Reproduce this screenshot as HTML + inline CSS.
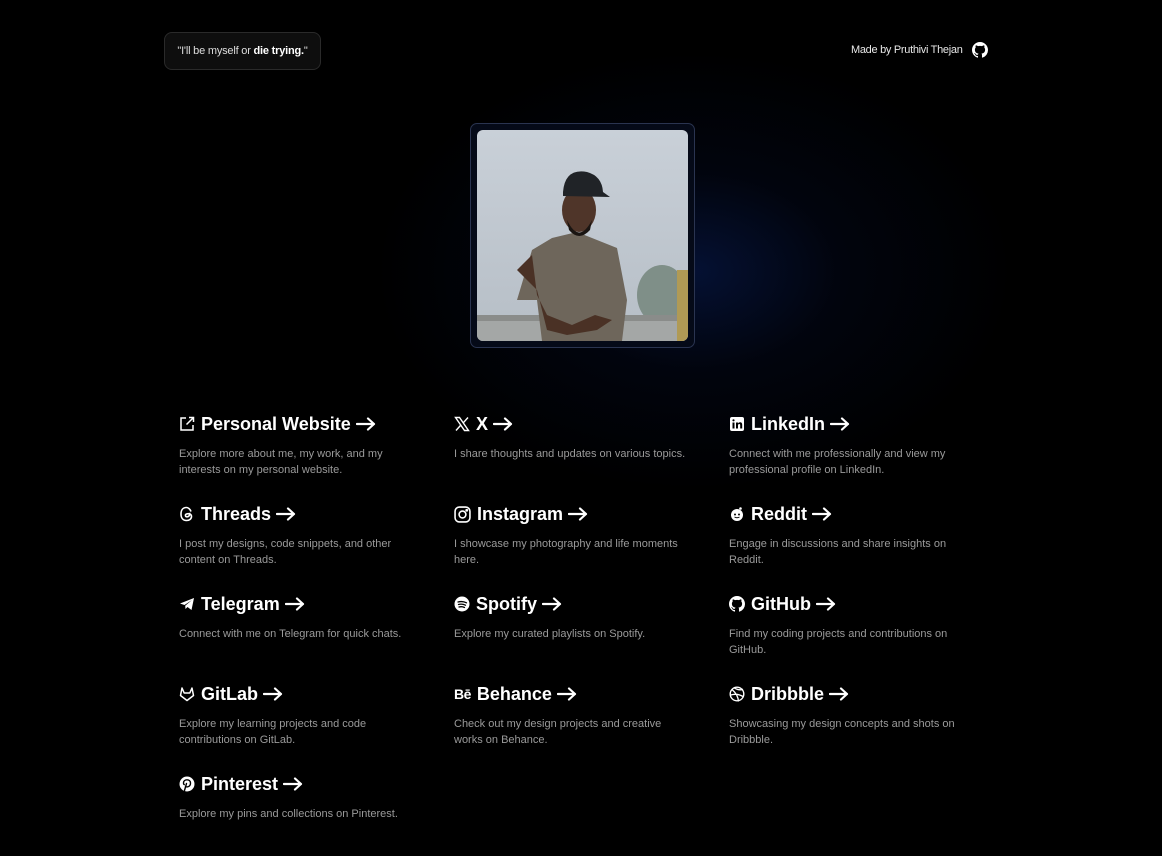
<!DOCTYPE html>
<html><head><meta charset="utf-8"><style>
*{margin:0;padding:0;box-sizing:border-box}
body{width:1162px;height:856px;background:#000;position:relative;overflow:hidden;font-family:"Liberation Sans",sans-serif;color:#fff}
.glow{position:absolute;left:230px;top:-20px;width:800px;height:560px;background:radial-gradient(ellipse 320px 220px at 58% 52%,rgba(8,28,85,.6) 0%,rgba(4,14,45,.3) 45%,rgba(0,0,0,0) 100%)}
.quote{position:absolute;left:164px;top:32px;width:157px;height:38px;border:1px solid #2a2a2a;border-radius:8px;background:#0e0e0e;font-size:11px;color:#ddd;display:flex;align-items:center;justify-content:center;letter-spacing:-.2px}
.quote b{color:#fff}
.made{position:absolute;left:851px;top:44px;font-size:11px;color:#e8e8e8;letter-spacing:-.3px}
.gh{position:absolute;left:972px;top:42px}
.card{position:absolute;left:470px;top:123px;width:225px;height:225px;border:1px solid #2a3450;border-radius:7px;background:#050a18}
.photo{position:absolute;left:477px;top:130px;width:211px;height:211px;border-radius:6px;overflow:hidden}
.item{position:absolute;width:234px}
.t{font-size:18px;font-weight:bold;display:flex;align-items:center;height:22px;white-space:nowrap}
.t svg{margin-right:6px;flex:none}
.t svg.ar{margin:0 0 0 5px}
.d{font-size:11px;color:#9a9a9a;line-height:16px;margin-top:11px}
</style></head><body>
<svg width="0" height="0" style="position:absolute"><defs>
<symbol id="arr" viewBox="0 0 20 14"><path d="M1 7h17M12 1.5L18 7l-6 5.5" fill="none" stroke="#fff" stroke-width="2.2" stroke-linecap="round" stroke-linejoin="round"/></symbol>
<symbol id="ghi" viewBox="0 0 16 16"><path fill="#fff" d="M8 0C3.58 0 0 3.58 0 8c0 3.54 2.29 6.53 5.47 7.59.4.07.55-.17.55-.38v-1.33c-2.230.48-2.7-1.07-2.7-1.07-.36-.92-.89-1.17-.89-1.17-.73-.5.05-.49.05-.49.8.06 1.23.83 1.23.83.71 1.23 1.87.87 2.33.66.07-.52.28-.87.5-1.07-1.78-.2-3.64-.89-3.64-3.95 0-.87.31-1.59.82-2.15-.08-.2-.36-1.02.08-2.12 0 0 .67-.21 2.2.82a7.6 7.6 0 0 1 4 0c1.53-1.04 2.2-.82 2.2-.82.44 1.1.16 1.92.08 2.12.51.56.82 1.27.82 2.15 0 3.07-1.87 3.75-3.65 3.95.29.25.54.73.54 1.48v2.2c0 .21.15.46.55.38A8 8 0 0 0 16 8c0-4.42-3.58-8-8-8z"/></symbol>
</defs></svg>
<div class="glow"></div>
<div class="quote"><span>"I'll be myself or <b>die trying.</b>"</span></div>
<div class="made">Made by Pruthivi Thejan</div>
<svg class="gh" width="16" height="16"><use href="#ghi"/></svg>
<div class="card"></div>
<div class="photo"><svg width="211" height="211" viewBox="0 0 211 211">
<defs><linearGradient id="sky" x1="0" y1="0" x2="0" y2="1"><stop offset="0" stop-color="#c9d0d8"/><stop offset="1" stop-color="#b6bec6"/></linearGradient></defs>
<rect width="211" height="211" fill="url(#sky)"/>
<ellipse cx="185" cy="165" rx="25" ry="30" fill="#7f8f88"/>
<rect x="0" y="188" width="211" height="23" fill="#a4a7a6"/>
<rect x="0" y="185" width="211" height="6" fill="#8a8c8a"/>
<rect x="200" y="140" width="11" height="71" fill="#b09a55"/>
<path d="M55 120 L75 108 L100 102 L120 110 L140 118 L150 170 L145 211 L65 211 L60 170 L40 170 Z" fill="#6e665b"/>
<path d="M40 140 L60 160 L70 200 L90 205 L120 200 L135 190 L118 185 L95 195 L70 185 L60 165 L55 125 Z" fill="#4a3125"/>
<ellipse cx="102" cy="80" rx="17" ry="22" fill="#4f3529"/>
<path d="M90 90 Q102 115 115 90 L113 100 Q102 112 92 100Z" fill="#1a1512"/>
<path d="M86 62 Q88 38 110 42 Q125 46 126 62 L133 67 L86 66Z" fill="#202327"/>
</svg></div>

<div class="item" style="left:179px;top:413px"><div class="t"><svg width="16" height="16" viewBox="0 0 16 16" fill="none" stroke="#fff" stroke-width="1.5"><path d="M7 2H2v12h12V9M10 1.5h4.5V6M14.5 1.5L7.5 8.5"/></svg>Personal Website<svg class="ar" width="20" height="14"><use href="#arr"/></svg></div><div class="d">Explore more about me, my work, and my interests on my personal website.</div></div>
<div class="item" style="left:454px;top:413px"><div class="t"><svg width="16" height="16" viewBox="0 0 16 16" fill="none" stroke="#fff" stroke-width="1.4"><path d="M1.5 1.5h4l9 13h-4zM14 1.5L9.3 6.8M2 14.5l4.9-5.5"/></svg>X<svg class="ar" width="20" height="14"><use href="#arr"/></svg></div><div class="d">I share thoughts and updates on various topics.</div></div>
<div class="item" style="left:729px;top:413px"><div class="t"><svg width="16" height="16" viewBox="0 0 16 16"><rect x="1" y="1" width="14" height="14" rx="2" fill="#fff"/><rect x="3.5" y="6.5" width="2" height="6" fill="#000"/><circle cx="4.5" cy="4.3" r="1.1" fill="#000"/><path d="M7 6.5h2v1c.5-.8 1.3-1.2 2.2-1.2 1.4 0 2 1 2 2.6v3.6h-2V9.2c0-.8-.3-1.2-.9-1.2s-1.3.4-1.3 1.3v3.2H7z" fill="#000"/></svg>LinkedIn<svg class="ar" width="20" height="14"><use href="#arr"/></svg></div><div class="d">Connect with me professionally and view my professional profile on LinkedIn.</div></div>

<div class="item" style="left:179px;top:503px"><div class="t"><svg width="16" height="16" viewBox="0 0 16 16" fill="none" stroke="#fff" stroke-width="1.6"><path d="M12 5.5C11 2.5 8.5 1.5 7.5 1.5 4 1.5 2 4 2 8s2 6.5 5.5 6.5c3 0 5-1.8 5-4 0-2.6-3-3.2-5-2.5-1.5.5-1.5 2.8.5 2.8s3-1.5 2.5-4"/></svg>Threads<svg class="ar" width="20" height="14"><use href="#arr"/></svg></div><div class="d">I post my designs, code snippets, and other content on Threads.</div></div>
<div class="item" style="left:454px;top:503px"><div class="t"><svg width="17" height="17" viewBox="0 0 16 16" fill="none" stroke="#fff" stroke-width="1.5"><rect x="1" y="1" width="14" height="14" rx="4"/><circle cx="8" cy="8" r="3.2"/><circle cx="12" cy="4" r=".6" fill="#fff"/></svg>Instagram<svg class="ar" width="20" height="14"><use href="#arr"/></svg></div><div class="d">I showcase my photography and life moments here.</div></div>
<div class="item" style="left:729px;top:503px"><div class="t"><svg width="16" height="16" viewBox="0 0 16 16"><circle cx="8" cy="9" r="6" fill="#fff"/><circle cx="11.5" cy="2.5" r="1.3" fill="#fff"/><circle cx="6" cy="8.5" r="1" fill="#000"/><circle cx="10" cy="8.5" r="1" fill="#000"/><path d="M5.5 11q2.5 1.5 5 0" stroke="#000" fill="none"/></svg>Reddit<svg class="ar" width="20" height="14"><use href="#arr"/></svg></div><div class="d">Engage in discussions and share insights on Reddit.</div></div>

<div class="item" style="left:179px;top:593px"><div class="t"><svg width="16" height="16" viewBox="0 0 16 16"><path d="M1 7.5L15 2l-2.5 12-4-3-2 2-.3-3.3L13 4 5.5 9 1 7.5z" fill="#fff"/></svg>Telegram<svg class="ar" width="20" height="14"><use href="#arr"/></svg></div><div class="d">Connect with me on Telegram for quick chats.</div></div>
<div class="item" style="left:454px;top:593px"><div class="t"><svg width="16" height="16" viewBox="0 0 16 16"><circle cx="8" cy="8" r="7.5" fill="#fff"/><path d="M4 6q4.5-1.2 8.5.8M4.5 8.5q3.5-1 7 .7M5 11q3-.8 5.5.5" stroke="#000" stroke-width="1.3" fill="none" stroke-linecap="round"/></svg>Spotify<svg class="ar" width="20" height="14"><use href="#arr"/></svg></div><div class="d">Explore my curated playlists on Spotify.</div></div>
<div class="item" style="left:729px;top:593px"><div class="t"><svg width="16" height="16"><use href="#ghi"/></svg>GitHub<svg class="ar" width="20" height="14"><use href="#arr"/></svg></div><div class="d">Find my coding projects and contributions on GitHub.</div></div>

<div class="item" style="left:179px;top:683px"><div class="t"><svg width="16" height="16" viewBox="0 0 16 16" fill="none" stroke="#fff" stroke-width="1.5" stroke-linejoin="round"><path d="M8 14.5L1.5 9.5 3 2l2.2 5h5.6L13 2l1.5 7.5z"/></svg>GitLab<svg class="ar" width="20" height="14"><use href="#arr"/></svg></div><div class="d">Explore my learning projects and code contributions on GitLab.</div></div>
<div class="item" style="left:454px;top:683px"><div class="t"><span style="font-size:14px;margin-right:6px;letter-spacing:-.5px">Bē</span>Behance<svg class="ar" width="20" height="14"><use href="#arr"/></svg></div><div class="d">Check out my design projects and creative works on Behance.</div></div>
<div class="item" style="left:729px;top:683px"><div class="t"><svg width="16" height="16" viewBox="0 0 16 16" fill="none" stroke="#fff" stroke-width="1.4"><circle cx="8" cy="8" r="6.8"/><path d="M3 3.5q6 5 6.5 12M1.5 9q7-2 12.5 1.5M5 1.8q5 3 9 1.5"/></svg>Dribbble<svg class="ar" width="20" height="14"><use href="#arr"/></svg></div><div class="d">Showcasing my design concepts and shots on Dribbble.</div></div>

<div class="item" style="left:179px;top:773px"><div class="t"><svg width="16" height="16" viewBox="0 0 16 16"><circle cx="8" cy="8" r="7.5" fill="#fff"/><path d="M7.5 7.5l-2 7M6.5 10.5c2 1 5 0 5-3.5 0-2-1.5-3.2-3.5-3.2S4.5 5 4.5 7c0 .8.3 1.4.8 1.6" stroke="#000" stroke-width="1.4" fill="none" stroke-linecap="round"/></svg>Pinterest<svg class="ar" width="20" height="14"><use href="#arr"/></svg></div><div class="d">Explore my pins and collections on Pinterest.</div></div>
</body></html>
